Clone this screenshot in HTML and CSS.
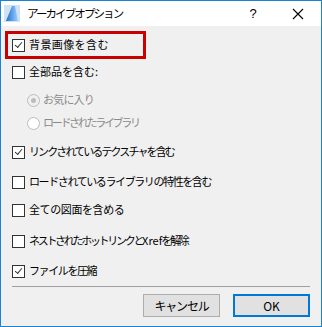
FILE: index.html
```html
<!DOCTYPE html>
<html>
<head>
<meta charset="utf-8" />
<title>アーカイブオプション</title>
<link rel="stylesheet" href="styles.css">
</head>
<body>
<div class="window">
	<div class="titlebar">
		<svg class="app_icon" width="16" height="17" viewBox="0 0 16 17">
			<defs>
				<linearGradient id="g" x1="0" y1="0" x2="1" y2="0">
					<stop offset="0" stop-color="#1e6fd0"/>
					<stop offset="1" stop-color="#9fd0ff"/>
				</linearGradient>
			</defs>
			<rect x="0" y="0" width="16" height="17" fill="#cfe3f7"/>
			<polygon points="2,16 8,1 11,1 14,16" fill="url(#g)"/>
		</svg>
		<span class="title">アーカイブオプション</span>
		<span class="tb_btn help">?</span>
		<span class="tb_btn close">
			<svg width="12" height="12" viewBox="0 0 12 12"><path d="M1 1L11 11M11 1L1 11" stroke="#000" stroke-width="1.1"/></svg>
		</span>
	</div>
	<div class="content">
		<div class="highlight">
			<label class="row wide"><span class="check on"></span>背景画像を含む</label>
		</div>
		<label class="row g6"><span class="check"></span>全部品を含む:</label>
		<label class="row radio_row g14 disabled tight1"><span class="radio on"></span>お気に入り</label>
		<label class="row radio_row g9 disabled tight4"><span class="radio"></span>ロードされたライブラリ</label>
		<label class="row g15 tight3"><span class="check on"></span>リンクされているテクスチャを含む</label>
		<label class="row g16 tight2"><span class="check"></span>ロードされているライブラリの特性を含む</label>
		<label class="row g14 tight0"><span class="check"></span>全ての図面を含める</label>
		<label class="row g17 tight4"><span class="check"></span>ネストされたホットリンクと<span class="latin">Xref</span>を解除</label>
		<label class="row g16 tight2"><span class="check on"></span>ファイルを圧縮</label>
		<div class="separator"></div>
		<div class="buttons">
			<button class="btn">キャンセル</button>
			<button class="btn default">OK</button>
		</div>
	</div>
</div>
</body>
</html>
```

FILE: styles.css
```css
body{margin:0;font:12px/1.2 "Noto Sans CJK JP","Liberation Sans",sans-serif;color:#000;}
.window{width:322px;height:327px;box-sizing:border-box;border:1px solid #1883d7;background:#f0f0f0;display:flex;flex-direction:column;}
.titlebar{height:25px;background:#fff;display:flex;align-items:center;padding-left:3px;}
.app_icon{display:block;}
.title{margin-left:7px;font-size:11.5px;flex:1;letter-spacing:-1.9px;}
.tb_btn{display:flex;justify-content:center;align-items:center;height:25px;}
.help{width:44px;font-size:13px;font-family:"Liberation Sans",sans-serif;}
.close{width:46px;}
.content{padding:5px 11px 0 11px;display:flex;flex-direction:column;flex:1;}
.highlight{margin-left:-7px;width:131px;height:22px;border:3px solid #c80000;display:flex;align-items:center;padding-left:4px;}
.row{display:flex;align-items:center;height:14px;white-space:nowrap;font-size:11px;}
.radio_row{padding-left:15px;}
.wide{letter-spacing:0.4px;}
.tight0{letter-spacing:-0.4px;}
.tight1{letter-spacing:-0.8px;}
.tight2{letter-spacing:-1.4px;}
.tight3{letter-spacing:-1.9px;}
.tight4{letter-spacing:-2.3px;}
.latin{letter-spacing:0;margin-right:-1px;}
.g6{margin-top:6px;}
.g9{margin-top:9px;}
.g14{margin-top:14px;}
.g15{margin-top:15px;}
.g16{margin-top:16px;}
.g17{margin-top:17px;}
.disabled{color:#8a8a8a;}
.check{width:11px;height:11px;border:1px solid #333;background:#fff;margin-right:4px;position:relative;flex:none;}
.check.on::after{content:"";position:absolute;width:6px;height:3px;border-left:1.3px solid #333;border-bottom:1.3px solid #333;transform:rotate(-50deg);transform-origin:center;top:2px;left:2px;letter-spacing:0;}
.radio{width:11px;height:11px;border:1px solid #bcbcbc;border-radius:50%;background:#fff;margin-right:3px;position:relative;flex:none;}
.radio.on{background:#f0f0f0;}
.radio.on::after{content:"";position:absolute;left:3px;top:3px;width:5px;height:5px;border-radius:50%;background:#bcbcbc;}
.separator{height:1px;background:#a0a0a0;margin-top:8px;}
.buttons{display:flex;justify-content:flex-end;gap:13px;margin-top:7px;}
.btn{width:77px;height:23px;box-sizing:border-box;border:1px solid #adadad;background:#e1e1e1;font:12px "Noto Sans CJK JP","Liberation Sans",sans-serif;letter-spacing:-1.2px;color:#000;padding:0;}
.btn.default{border:2px solid #0078d7;letter-spacing:0;}
```
